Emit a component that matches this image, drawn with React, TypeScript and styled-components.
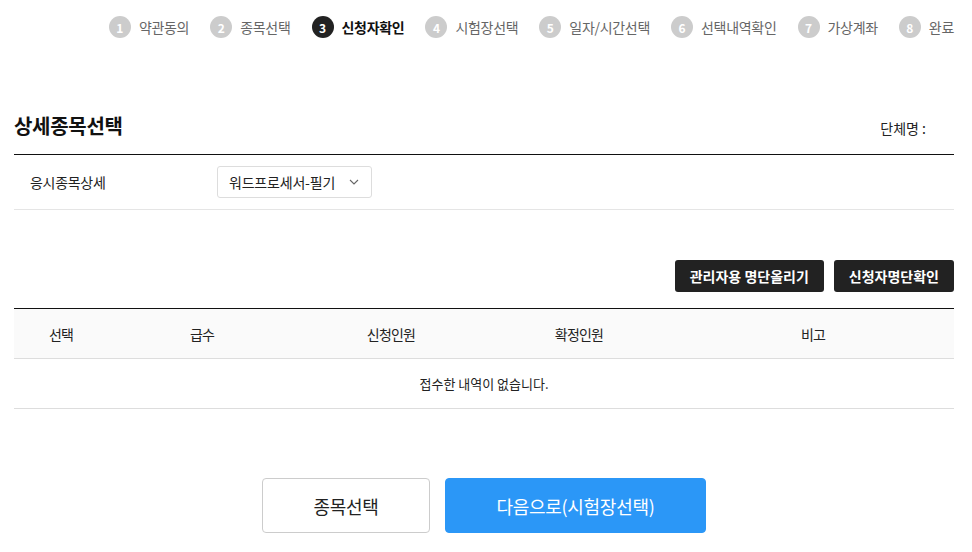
import React from 'react';
import styled, { createGlobalStyle } from 'styled-components';

const GlobalStyle = createGlobalStyle`
  body {
    margin: 0;
    background: #fff;
    font-family: "Noto Sans CJK KR", "Noto Sans", sans-serif;
    color: #222;
  }
`;

const Page = styled.div`
  width: 972px;
  padding: 0 18px 0 14px;
  box-sizing: border-box;
`;

const Stepper = styled.ol`
  display: flex;
  justify-content: flex-end;
  gap: 21px;
  list-style: none;
  margin: 0;
  padding: 16px 0 0;
  height: 22px;
  white-space: nowrap;
`;

const Step = styled.li<{ $active?: boolean }>`
  display: flex;
  align-items: center;
  gap: 8px;
  font-size: 14px;
  letter-spacing: -0.3px;
  color: ${(p) => (p.$active ? '#111' : '#666')};
  font-weight: ${(p) => (p.$active ? 700 : 400)};
`;

const StepNum = styled.span<{ $active?: boolean }>`
  width: 22px;
  height: 22px;
  border-radius: 50%;
  background: ${(p) => (p.$active ? '#222' : '#ccc')};
  color: #fff;
  font-size: 12px;
  font-weight: 700;
  letter-spacing: 0;
  display: flex;
  align-items: center;
  justify-content: center;
`;

const TitleRow = styled.div`
  display: flex;
  justify-content: space-between;
  align-items: center;
  margin-top: 72px;
  height: 30px;
  margin-bottom: 14px;
`;

const Title = styled.h2`
  margin: 0;
  font-size: 20px;
  font-weight: 700;
  letter-spacing: -0.3px;
  color: #111;
`;

const GroupName = styled.span`
  font-size: 14px;
  letter-spacing: 0;
  margin-right: 28px;
  padding-top: 6px;
`;

const FormRow = styled.div`
  display: grid;
  grid-template-columns: 203px 1fr;
  align-items: center;
  border-top: 1px solid #111;
  border-bottom: 1px solid #e5e5e5;
  padding: 11px 0;
`;

const Label = styled.div`
  padding-left: 16px;
  font-size: 14px;
  letter-spacing: -0.3px;
  color: #222;
`;

const Select = styled.div`
  width: 155px;
  height: 32px;
  box-sizing: border-box;
  border: 1px solid #ddd;
  border-radius: 3px;
  display: flex;
  align-items: center;
  justify-content: space-between;
  padding: 0 12px 0 11px;
  font-size: 14px;
  letter-spacing: -0.2px;
  color: #222;
`;

const ActionBar = styled.div`
  display: flex;
  justify-content: flex-end;
  gap: 10px;
  margin-top: 50px;
`;

const DarkButton = styled.button`
  height: 32px;
  padding: 0 15px;
  background: #222;
  color: #fff;
  border: none;
  border-radius: 3px;
  font-family: inherit;
  font-size: 14px;
  font-weight: 700;
  letter-spacing: 0;
`;

const Table = styled.table`
  width: 100%;
  margin-top: 16px;
  border-collapse: collapse;
  border-top: 1px solid #111;
  table-layout: fixed;
`;

const Th = styled.th<{ $w: number }>`
  width: ${(p) => p.$w}px;
  height: 49px;
  background: #fafafa;
  border-bottom: 1px solid #ddd;
  font-size: 14px;
  font-weight: 400;
  letter-spacing: -0.8px;
  color: #222;
  padding: 0;
`;

const Td = styled.td`
  height: 49px;
  border-bottom: 1px solid #ddd;
  text-align: center;
  font-size: 13px;
  letter-spacing: 0;
  color: #222;
  padding: 0;
`;

const BottomBar = styled.div`
  display: flex;
  justify-content: center;
  gap: 15px;
  margin-top: 69px;
`;

const BigButton = styled.button<{ $primary?: boolean }>`
  height: 55px;
  width: ${(p) => (p.$primary ? '261px' : '168px')};
  border-radius: 4px;
  border: 1px solid ${(p) => (p.$primary ? '#2b97f7' : '#ccc')};
  background: ${(p) => (p.$primary ? '#2b97f7' : '#fff')};
  color: ${(p) => (p.$primary ? '#fff' : '#222')};
  font-family: inherit;
  font-size: 18px;
  letter-spacing: -0.3px;
`;

const steps = ['약관동의', '종목선택', '신청자확인', '시험장선택', '일자/시간선택', '선택내역확인', '가상계좌', '완료'];

const columns: [string, number][] = [
  ['선택', 94],
  ['급수', 188],
  ['신청인원', 190],
  ['확정인원', 186],
  ['비고', 282],
];

export default function App() {
  return (
    <Page>
      <GlobalStyle />
      <Stepper>
        {steps.map((s, i) => (
          <Step key={s} $active={i === 2}>
            <StepNum $active={i === 2}>{i + 1}</StepNum>
            {s}
          </Step>
        ))}
      </Stepper>

      <TitleRow>
        <Title>상세종목선택</Title>
        <GroupName>단체명 :</GroupName>
      </TitleRow>

      <FormRow>
        <Label>응시종목상세</Label>
        <Select>
          워드프로세서-필기
          <svg width="10" height="6" viewBox="0 0 10 6" fill="none">
            <path d="M1 1l4 4 4-4" stroke="#666" strokeWidth="1.1" />
          </svg>
        </Select>
      </FormRow>

      <ActionBar>
        <DarkButton>관리자용 명단올리기</DarkButton>
        <DarkButton>신청자명단확인</DarkButton>
      </ActionBar>

      <Table>
        <thead>
          <tr>
            {columns.map(([c, w]) => (
              <Th key={c} $w={w}>{c}</Th>
            ))}
          </tr>
        </thead>
        <tbody>
          <tr>
            <Td colSpan={5}>접수한 내역이 없습니다.</Td>
          </tr>
        </tbody>
      </Table>

      <BottomBar>
        <BigButton>종목선택</BigButton>
        <BigButton $primary>다음으로(시험장선택)</BigButton>
      </BottomBar>
    </Page>
  );
}
